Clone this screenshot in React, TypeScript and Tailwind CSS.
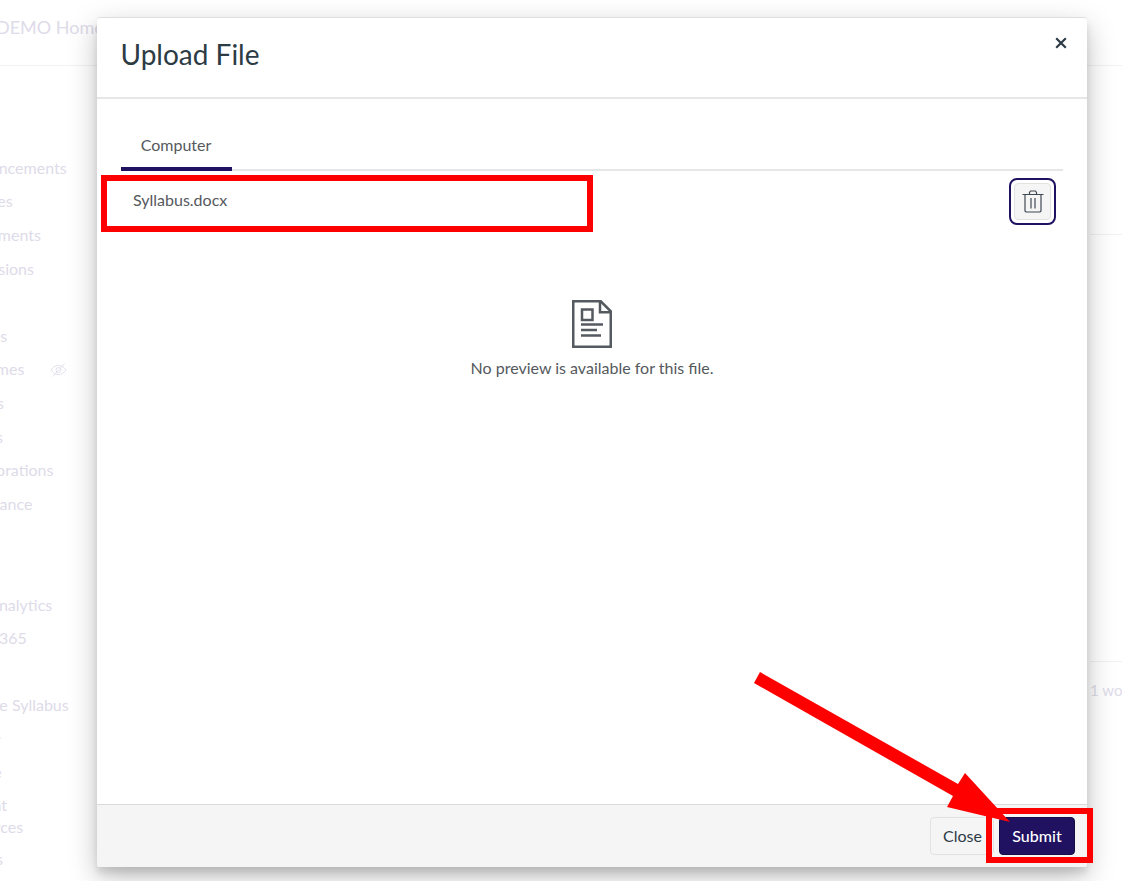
const NAV_ROWS = [
  "Announcements",
  "Modules",
  "Assignments",
  "Discussions",
  "",
  "Quizzes",
  "Outcomes",
  "Rubrics",
  "Groups",
  "Collaborations",
  "Attendance",
  "",
  "",
  "New Analytics",
  "Office 365",
  "",
  "Module Syllabus",
  "Library",
  "Course",
  "Student\nResources",
  "Groups",
];

const EyeOffIcon = () => (
  <svg width="17" height="14" viewBox="0 0 17 14" fill="none" stroke="#e3e0ec" strokeWidth="1">
    <path d="M1 7c2-3 4.500-4.500 7.500-4.500S14 4 16 7c-2 3-4.500 4.500-7.500 4.500S3 10 1 7z" />
    <circle cx="8.500" cy="7" r="2.500" />
    <path d="M3 13.500 14.500 .5" />
  </svg>
);

const TrashIcon = () => (
  <svg width="22" height="24" viewBox="0 0 22 24" fill="none" stroke="#3f4952" strokeWidth="1.200">
    <path d="M.5 4.500h21" />
    <path d="M7.500 4.500V2.500l1-1.500h5l1 1.500v2" />
    <path d="M3 4.500v16.500l1 1h14l1-1V4.500" />
    <path d="M9 8v10.500M13 8v10.500" />
  </svg>
);

const DocumentIcon = () => (
  <svg width="40" height="48" viewBox="0 0 40 48" fill="none" stroke="#555a60" strokeWidth="2.500">
    <path d="M1.250 1.250h27.500l10 10v35.500H1.250z" />
    <path d="M28 1.250v11h10.750" />
    <path d="M10 9.500h10.500v10.500H10z" />
    <path d="M9 24.500h22M9 30h16M9 35.500h20" />
  </svg>
);

const CloseIcon = () => (
  <svg width="12" height="12" viewBox="0 0 12 12" fill="none" stroke="#2d3b45" strokeWidth="2.200">
    <path d="M1.200 1.200l9.600 9.600M10.800 1.200l-9.600 9.600" />
  </svg>
);

function Background() {
  return (
    <div className="flex h-full flex-col text-[#dedbe9]">
      <header className="flex h-[66px] shrink-0 items-center border-b border-[#f1f1f3] pb-[11px]">
        <span className="ml-[-4px] whitespace-nowrap text-[18px]">DEMO Home</span>
      </header>
      <div className="flex flex-1">
        <nav className="ml-[-48px] w-[138px] shrink-0 pt-[85px] text-[16px] leading-[22px]">
          {NAV_ROWS.map((row, i) => (
            <div
              key={i}
              className={
                row.includes("\n")
                  ? "relative flex min-h-[53px] items-center whitespace-pre-line"
                  : "relative flex min-h-[33.6px] items-center whitespace-pre-line"
              }
            >
              <span className={row === "Module Syllabus" ? "pl-[2px]" : ""}>{row}</span>
              {row === "Outcomes" && (
                <span className="absolute left-[98px] top-[10px]">
                  <EyeOffIcon />
                </span>
              )}
            </div>
          ))}
        </nav>
        <main className="flex-1 pl-[1000px]">
          <div className="h-[169px] border-b border-[#f1f1f3]" />
          <div className="h-[427px] border-b border-[#f1f1f3]" />
        </main>
      </div>
      <span className="absolute left-[1090px] top-[679px] whitespace-nowrap text-[15px] leading-[22px]">
        1 word
      </span>
    </div>
  );
}

function UploadModal() {
  return (
    <div className="absolute left-[97px] top-[17px] flex h-[850px] w-[990px] flex-col overflow-hidden rounded-[3px] border-t border-[#dcdfe2] bg-white shadow-[0_6px_7px_rgba(0,0,0,0.1),0_10px_28px_rgba(0,0,0,0.25)]">
      <div className="relative flex h-[81px] shrink-0 items-center border-b-2 border-[#e4e6e8] pb-[7px] pl-[23.5px]">
        <h1 className="text-[28px] leading-9 text-[#2d3b45]">Upload File</h1>
        <button className="absolute right-[20px] top-[19px]">
          <CloseIcon />
        </button>
      </div>
      <div className="flex flex-1 flex-col px-6">
        <div className="flex h-[72px] items-end border-b-[2px] border-[#e4e6e8]">
          <div className="mb-[-2px] flex h-[37px] w-[111px] justify-center border-b-4 border-[#201260] pr-[1px] text-[16px] leading-[22px] text-[#55595d]">
            Computer
          </div>
        </div>
        <div className="flex h-[129px] items-start justify-between pl-3 pr-[7px]">
          <span className="pt-[18px] text-[16px] leading-[22px] text-[#55595d]">Syllabus.docx</span>
          <div className="mt-[7px] rounded-[8px] border-2 border-[#201260] p-[3px]">
            <button className="flex h-[37px] w-[37px] items-center justify-center rounded-[4px] border border-[#e2e2e2] bg-[#f5f5f5]">
              <TrashIcon />
            </button>
          </div>
        </div>
        <div className="flex flex-col items-center">
          <DocumentIcon />
          <p className="mt-[8px] text-[16px] leading-6 text-[#55595d]">No preview is available for this file.</p>
        </div>
      </div>
      <div className="flex h-[63px] shrink-0 items-center justify-end gap-[5px] border-t border-[#d8dadc] bg-[#f5f5f5] pb-[1px] pr-3">
        <button className="h-[38px] w-[64px] rounded-[4px] border border-[#e2e2e2] bg-[#f5f5f5] pl-[1px] text-[16px] text-[#2d3b45]">
          Close
        </button>
        <button className="h-[38px] w-[76px] rounded-[4px] border border-[#160c48] bg-[#201260] text-[16px] font-medium text-white">
          Submit
        </button>
      </div>
    </div>
  );
}

export default function App() {
  return (
    <div className="relative h-[881px] w-full overflow-hidden bg-white font-['Lato',sans-serif]">
      <Background />
      <UploadModal />
      {/* red annotations */}
      <div className="absolute left-[101px] top-[175px] h-[57px] w-[492px] border-[6px] border-[#ff0000]" />
      <div className="absolute left-[986px] top-[808px] h-[55px] w-[107px] border-[6px] border-[#ff0000]" />
      <svg className="absolute left-0 top-0" width="1122" height="881" fill="none">
        <path d="M754 683 760 672 958 784 965 773 1010 822 947 807 953 796z" fill="#ff0000" />
      </svg>
    </div>
  );
}
